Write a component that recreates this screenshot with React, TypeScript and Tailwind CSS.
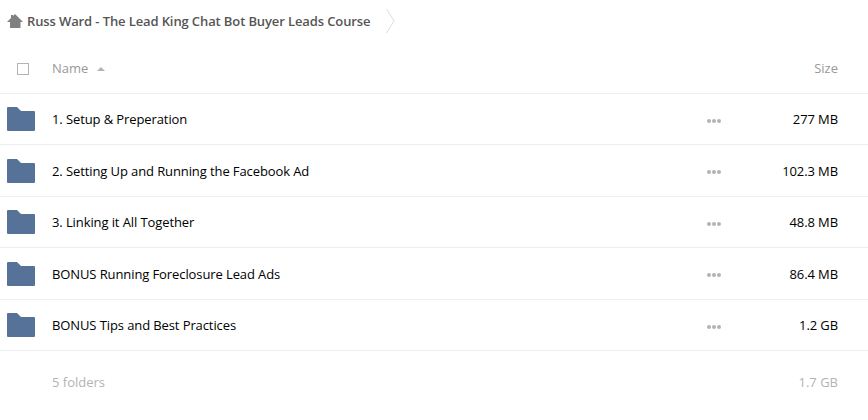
const folders = [
  { name: "1. Setup & Preperation", size: "277 MB", row: "h-[51px]", dots: "mt-[3px]" },
  { name: "2. Setting Up and Running the Facebook Ad", size: "102.3 MB", row: "h-[52px] pt-px", dots: "mt-px" },
  { name: "3. Linking it All Together", size: "48.8 MB", row: "h-[51px]", dots: "mt-[3px]" },
  { name: "BONUS Running Foreclosure Lead Ads", size: "86.4 MB", row: "h-[52px] pt-px", dots: "mt-px" },
  { name: "BONUS Tips and Best Practices", size: "1.2 GB", row: "h-[51px]", dots: "mt-[3px]" },
];

function HomeIcon() {
  return (
    <svg width="16" height="14" viewBox="0 0 16 14" fill="#808080" className="shrink-0">
      <path d="M8 0 L16 8 H13.5 V14 H3 V8 H0 L4 4 V1 H6 V2 Z" />
    </svg>
  );
}

function FolderIcon() {
  return (
    <svg width="28" height="24" viewBox="0 0 28 24" className="shrink-0">
      <path d="M1 0 H10 L14 4 H27 Q28 4 28 5 V23 Q28 24 27 24 H1 Q0 24 0 23 V1 Q0 0 1 0 Z" fill="#567299" />
    </svg>
  );
}

function Dots({ className }: { className: string }) {
  return (
    <svg width="14" height="4" viewBox="0 0 14 4" fill="#b3b3b3" className={className}>
      <circle cx="2" cy="2" r="2" />
      <circle cx="7" cy="2" r="2" />
      <circle cx="12" cy="2" r="2" />
    </svg>
  );
}

export default function App() {
  return (
    <div className="h-[420px] w-[868px] bg-white font-['Open_Sans',sans-serif] text-[13px] text-black">
      {/* Breadcrumb */}
      <div className="flex h-[42px] items-center pl-[7px]">
        <HomeIcon />
        <span className="mt-[2px] ml-1 font-semibold tracking-[-0.115px] text-[#555555]">
          Russ Ward - The Lead King Chat Bot Buyer Leads Course
        </span>
        <svg width="9" height="24" viewBox="0 0 9 24" fill="none" stroke="#dddddd" className="ml-4">
          <path d="M0.5 0 L8 12 L0.5 24" />
        </svg>
      </div>

      {/* Column headers */}
      <div className="flex h-[52px] items-center border-b border-[#eeeeee] pt-[3px] pr-[30px] pl-[17px] text-[#999999]">
        <span className="size-3 border border-[#b3b3b3]" />
        <span className="ml-[23px]">Name</span>
        <svg width="8" height="4" viewBox="0 0 8 4" fill="#b3b3b3" className="ml-[9px]">
          <path d="M4 0 L8 4 H0 Z" />
        </svg>
        <span className="ml-auto">Size</span>
      </div>

      {folders.map((folder) => (
        <div
          key={folder.name}
          className={`flex items-center border-b border-[#eeeeee] pr-[30px] pl-[7px] ${folder.row}`}
        >
          <FolderIcon />
          <span className="mt-px ml-[17px] flex-1 tracking-[-0.1px]">{folder.name}</span>
          <Dots className={folder.dots} />
          <span className="mt-px w-[117px] text-right tracking-[-0.1px]">{folder.size}</span>
        </div>
      ))}

      {/* Totals */}
      <div className="flex h-[63px] items-center justify-between pr-[30px] pl-[52px] text-[#b3b3b3]">
        <span>5 folders</span>
        <span>1.7 GB</span>
      </div>
    </div>
  );
}
